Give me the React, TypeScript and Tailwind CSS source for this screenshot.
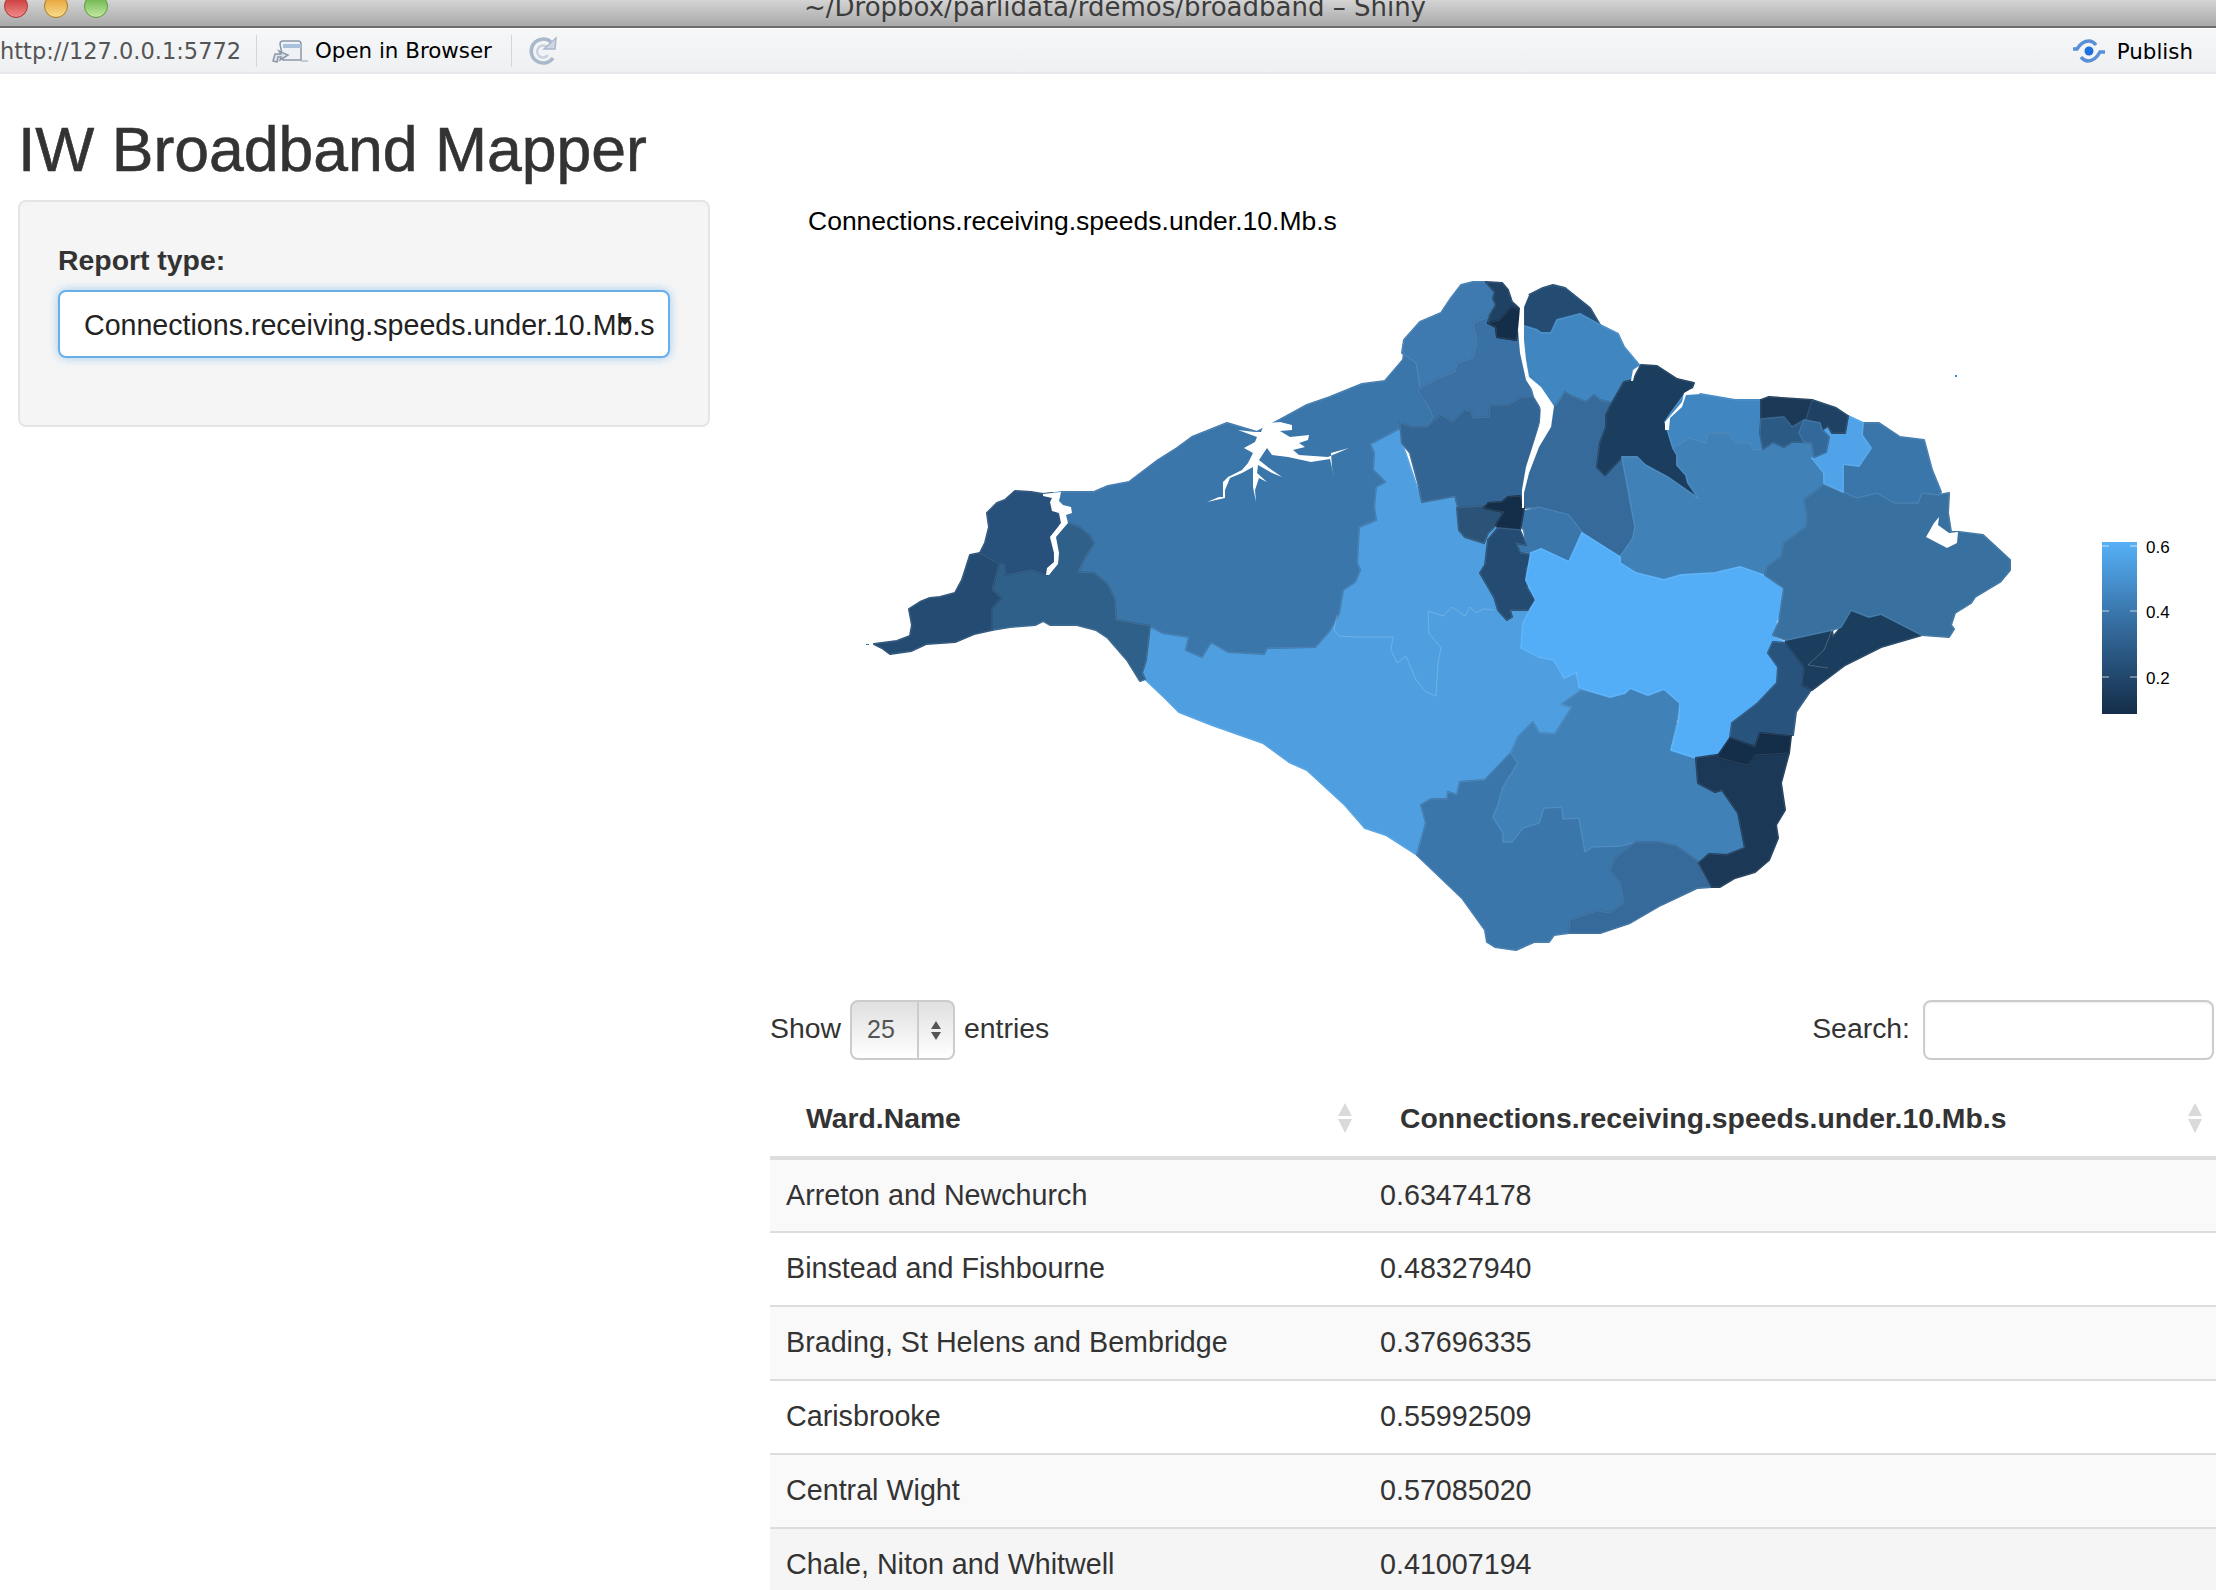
import React from 'react';

const SANS = "font-['Liberation_Sans',Arial,sans-serif]";
const UI = "font-['DejaVu_Sans',sans-serif]";

// ward shapes, painted in order so later ones define the shared edges
const wards: { fill: string; pts: string }[] = [
  { fill: '#4f9fe0', pts: '1400,428 1370,444 1374,453 1373,470 1385,482 1376,487 1374,507 1376,520 1359,527 1357,563 1360,570 1355,582 1343,590 1339,613 1330,630 1315,647 1267,648 1264,654 1228,652 1211,642 1202,657 1186,650 1189,637 1163,633 1150,626 1146,660 1142,673 1145,679 1164,697 1179,712 1212,725 1263,743 1289,762 1307,770 1345,805 1365,828 1386,835 1417,855 1426,823 1421,805 1431,799 1447,799 1448,792 1457,795 1460,782 1485,780 1511,753 1518,737 1533,722 1539,733 1555,734 1572,707 1562,704 1582,690 1560,640 1530,560 1500,530 1459,512 1455,496 1422,502 1402,443' },
  { fill: '#3b76ab', pts: '1062,492 1094,492 1108,486 1129,482 1158,460 1177,448 1192,437 1227,423 1257,432 1274,423 1307,405 1330,397 1362,384 1385,381 1403,360 1406,340 1416,363 1420,380 1420,393 1426,403 1433,417 1426,427 1410,427 1400,423 1400,428 1370,444 1374,453 1373,470 1385,482 1376,487 1374,507 1376,520 1359,527 1357,563 1360,570 1355,582 1343,590 1339,613 1330,630 1315,647 1267,648 1264,654 1228,652 1211,642 1202,657 1186,650 1189,637 1163,633 1150,626 1116,620 1115,600 1108,585 1094,573 1078,572 1085,557 1094,543 1089,535 1079,527 1060,525 1050,505 1050,494' },
  { fill: '#2f6089', pts: '999,564 1004,564 1006,575 1031,570 1047,575 1050,550 1050,530 1068,523 1079,527 1089,535 1094,543 1085,557 1078,572 1094,573 1108,585 1115,600 1116,620 1150,626 1146,660 1142,673 1145,679 1140,681 1127,660 1108,638 1096,630 1077,625 1050,625 1043,621 1035,625 1010,627 992,630 992,608 1001,598 992,590' },
  { fill: '#27507a', pts: '980,553 985,543 989,527 987,513 997,503 1005,500 1015,491 1031,492 1043,494 1052,493 1052,507 1060,517 1060,527 1050,537 1054,553 1054,565 1047,575 1031,570 1006,575 1004,564 999,564' },
  { fill: '#244c73', pts: '874,644 897,641 910,636 912,625 909,609 920,602 930,598 940,597 955,593 962,580 970,555 980,553 999,564 992,590 1001,598 992,608 992,630 974,634 955,642 926,644 911,651 890,654 882,648' },
  { fill: '#3e7ab0', pts: '1404,340 1420,322 1441,313 1451,298 1461,285 1473,282 1486,282 1496,293 1494,302 1496,305 1489,317 1473,323 1477,343 1473,358 1457,363 1455,372 1439,378 1420,388 1418,373 1416,363 1402,353' },
  { fill: '#3a71a4', pts: '1473,323 1489,317 1489,325 1496,327 1497,337 1516,340 1520,327 1522,353 1533,397 1522,397 1508,405 1490,405 1489,417 1471,418 1470,410 1453,422 1441,415 1427,427 1433,417 1427,403 1418,392 1420,388 1439,378 1455,372 1457,363 1473,358 1477,343' },
  { fill: '#336594', pts: '1400,423 1412,427 1427,427 1441,415 1453,422 1465,410 1471,411 1473,418 1489,417 1490,405 1508,405 1522,397 1533,397 1539,407 1541,413 1535,440 1526,467 1522,490 1522,497 1516,496 1506,500 1498,503 1486,503 1484,510 1459,511 1455,496 1422,502 1418,483 1410,453 1402,443' },
  { fill: '#1f4264', pts: '1486,282 1502,283 1508,290 1512,302 1520,308 1520,320 1516,340 1497,337 1496,327 1488,323 1490,315 1496,305 1493,298 1495,292' },
  { fill: '#142d48', pts: '1500,320 1512,307 1520,310 1520,320 1516,340 1497,337 1496,327 1488,323' },
  { fill: '#244c73', pts: '1529,295 1543,288 1553,285 1565,288 1580,300 1590,308 1600,325 1580,314 1557,320 1551,333 1541,333 1537,330 1524,326 1524,307' },
  { fill: '#4087c2', pts: '1524,326 1537,330 1541,333 1551,333 1557,320 1580,314 1600,325 1618,334 1624,347 1639,365 1633,370 1631,381 1624,382 1612,403 1600,400 1594,395 1586,402 1571,396 1565,392 1557,405 1553,406 1541,387 1529,377 1526,360 1520,337' },
  { fill: '#356a9a', pts: '1557,405 1565,392 1571,396 1586,402 1594,395 1600,400 1612,403 1606,415 1606,427 1600,443 1597,467 1605,475 1622,457 1635,527 1633,538 1620,557 1582,532 1569,515 1539,507 1524,508 1522,493 1529,473 1539,447 1551,427 1554,406' },
  { fill: '#1b3d5e', pts: '1641,365 1657,366 1677,379 1694,383 1692,388 1684,395 1671,413 1665,422 1669,435 1677,455 1677,465 1686,475 1688,483 1699,499 1682,487 1669,478 1645,465 1637,457 1622,457 1605,475 1597,467 1600,443 1606,427 1606,415 1612,403 1624,382 1633,380' },
  { fill: '#4087c2', pts: '1700,394 1735,400 1761,400 1760,433 1763,449 1753,450 1751,443 1735,443 1728,433 1708,433 1706,443 1690,438 1673,448 1669,435 1665,422 1671,413 1684,395' },
  { fill: '#4081b8', pts: '1622,457 1637,457 1645,465 1669,478 1682,487 1699,499 1688,483 1686,475 1677,465 1677,455 1673,448 1690,438 1706,443 1708,433 1728,433 1735,443 1751,443 1753,450 1763,449 1773,442 1784,447 1792,442 1804,442 1812,443 1814,457 1812,458 1824,473 1824,485 1804,500 1807,515 1806,527 1784,543 1781,557 1767,567 1765,575 1743,571 1722,570 1714,574 1681,575 1665,580 1641,575 1620,563 1620,557 1633,538 1635,527' },
  { fill: '#3b76ab', pts: '1529,510 1539,507 1569,515 1582,532 1575,550 1569,562 1553,555 1541,549 1531,553 1520,553 1516,543 1526,545 1524,530 1518,523 1520,512' },
  { fill: '#2b5377', pts: '1457,508 1484,506 1504,506 1504,512 1496,525 1488,533 1484,543 1465,537 1459,530' },
  { fill: '#142d48', pts: '1484,508 1488,503 1502,502 1508,497 1520,496 1524,508 1520,530 1498,528 1496,525 1504,512' },
  { fill: '#244c73', pts: '1498,528 1520,530 1526,545 1516,543 1520,553 1531,555 1531,567 1526,568 1527,588 1536,602 1531,610 1510,610 1512,617 1507,620 1498,610 1494,597 1480,573 1485,565 1488,540' },
  { fill: '#3b76ab', pts: '1511,753 1485,780 1460,782 1457,795 1448,792 1447,799 1431,799 1421,805 1426,823 1417,855 1462,898 1485,930 1487,942 1495,947 1516,950 1534,942 1549,942 1554,935 1569,933 1570,920 1597,911 1610,913 1624,903 1620,882 1610,870 1615,858 1636,842 1590,800 1540,740' },
  { fill: '#4081b8', pts: '1562,704 1582,690 1610,697 1630,688 1648,695 1664,689 1680,703 1671,750 1696,758 1698,783 1715,792 1722,790 1738,813 1745,848 1727,855 1709,854 1699,863 1676,847 1658,843 1636,842 1620,846 1592,847 1585,852 1579,818 1563,819 1562,807 1544,808 1539,823 1523,828 1512,842 1503,842 1503,833 1493,817 1498,805 1503,787 1518,763 1511,753 1518,737 1533,722 1539,733 1555,734 1572,707' },
  { fill: '#356a9a', pts: '1570,920 1597,911 1610,913 1624,903 1620,882 1610,870 1615,858 1636,842 1658,842 1676,846 1699,862 1704,875 1712,887 1697,888 1661,905 1630,923 1600,933 1569,933' },
  { fill: '#54aef7', pts: '1582,533 1620,557 1620,563 1636,573 1664,580 1681,575 1715,573 1740,567 1766,576 1783,588 1781,607 1784,607 1776,622 1779,630 1774,637 1784,642 1771,652 1778,667 1777,683 1758,703 1732,723 1730,752 1696,758 1671,750 1679,720 1680,703 1664,689 1648,695 1630,688 1625,693 1610,697 1587,690 1579,687 1577,672 1564,678 1554,660 1539,657 1521,648 1523,623 1531,608 1536,600 1526,580 1531,553 1541,549 1569,562' },
  { fill: '#1b3857', pts: '1696,758 1730,753 1755,755 1789,753 1781,783 1785,810 1776,825 1778,838 1769,860 1755,872 1735,878 1720,887 1712,887 1699,863 1709,854 1727,855 1745,848 1738,813 1722,790 1715,792 1698,783' },
  { fill: '#28537d', pts: '1773,642 1786,643 1804,667 1801,683 1811,690 1796,712 1793,735 1760,733 1755,747 1730,738 1732,723 1758,703 1777,683 1778,667 1768,653' },
  { fill: '#142d48', pts: '1717,757 1730,738 1755,747 1760,733 1791,736 1789,753 1755,755 1748,765 1738,763 1720,758' },
  { fill: '#1b3d5e', pts: '1786,640 1832,630 1833,637 1841,627 1851,610 1869,617 1881,614 1922,635 1881,647 1845,665 1812,690 1802,685 1804,667 1786,643' },
  { fill: '#38709f', pts: '1824,485 1843,492 1857,498 1877,493 1894,503 1918,503 1922,493 1939,495 1949,493 1948,513 1951,532 1959,532 1983,535 2010,560 2010,570 2000,582 1975,597 1971,603 1955,613 1951,625 1954,629 1949,637 1922,635 1881,614 1869,617 1851,610 1841,627 1832,630 1786,640 1773,635 1779,622 1784,588 1765,575 1767,567 1781,557 1784,543 1806,527 1807,515 1804,500' },
  { fill: '#3b76ab', pts: '1863,423 1879,423 1900,437 1924,440 1932,470 1941,492 1939,495 1922,493 1918,503 1894,503 1877,493 1857,498 1843,492 1843,464 1859,466 1863,452 1871,448 1862,435' },
  { fill: '#50a3e8', pts: '1848,416 1863,423 1862,435 1871,448 1859,466 1843,464 1843,492 1824,483 1824,473 1812,458 1826,452 1829,437 1822,430 1828,426 1832,433 1845,433' },
  { fill: '#1b3857', pts: '1761,400 1769,397 1812,400 1810,415 1804,420 1792,427 1786,425 1781,417 1761,419' },
  { fill: '#1f4264', pts: '1812,400 1836,408 1848,416 1845,433 1832,433 1828,426 1822,430 1820,423 1806,420' },
  { fill: '#2b5a85', pts: '1761,419 1784,417 1792,427 1804,420 1799,433 1804,442 1792,442 1784,447 1773,442 1763,449 1760,433' },
  { fill: '#33689a', pts: '1804,420 1820,423 1822,430 1829,437 1826,452 1814,457 1812,443 1804,442 1799,433' },
];

// estuaries and harbours cut out of the land
const water = [
  '1238,430 1255,432 1261,432 1263,427 1269,423 1280,422 1292,425 1292,430 1280,431 1290,437 1309,435 1308,440 1299,443 1305,447 1293,450 1299,455 1328,457 1349,448 1331,453 1332,467 1334,477 1330,459 1311,462 1288,457 1272,455 1267,448 1259,460 1269,468 1282,477 1272,473 1258,465 1257,473 1267,482 1259,478 1255,490 1256,502 1253,487 1253,467 1242,473 1230,478 1225,490 1225,498 1207,502 1219,497 1223,497 1223,482 1228,477 1242,470 1248,463 1253,453 1244,448 1255,442 1257,437',
  '1043,494 1061,492 1060,497 1059,501 1063,505 1071,507 1072,513 1066,515 1068,523 1056,537 1059,553 1058,564 1049,575 1046,575 1047,568 1054,562 1054,553 1050,537 1061,523 1059,513 1052,511 1050,502 1052,498 1043,496',
  '1510,288 1514,302 1520,308 1518,330 1520,353 1526,380 1541,403 1540,423 1526,467 1522,490 1522,508 1524,508 1524,493 1529,473 1539,447 1551,427 1554,406 1541,387 1529,377 1526,360 1524,340 1524,307 1529,295 1522,288',
  '1694,388 1700,394 1686,395 1682,407 1670,418 1669,430 1665,430 1665,422 1682,402 1684,393 1691,389',
  '1633,370 1639,366 1635,372 1633,381 1631,381',
  '1939,517 1938,525 1949,533 1958,532 1957,543 1947,548 1926,537 1934,523',
];

const rows = [
  ['Arreton and Newchurch', '0.63474178', 'bg-[#f9f9f9]'],
  ['Binstead and Fishbourne', '0.48327940', 'bg-white'],
  ['Brading, St Helens and Bembridge', '0.37696335', 'bg-[#f9f9f9]'],
  ['Carisbrooke', '0.55992509', 'bg-white'],
  ['Central Wight', '0.57085020', 'bg-[#f9f9f9]'],
  ['Chale, Niton and Whitwell', '0.41007194', 'bg-[#f5f5f5]'],
];

const SortIcon = ({ className }: { className: string }) => (
  <svg className={className} width="18" height="32" viewBox="0 0 18 32">
    <path d="M9 1 L16 14 H2 Z M9 31 L16 17 H2 Z" fill="#dadada" />
  </svg>
);

const Chart = () => (
  <svg className="block" width="1446" height="810" viewBox="770 190 1446 810">
    <text x="808" y="230" fontSize="26.5" fill="#000" fontFamily="Liberation Sans, Arial, sans-serif">
      Connections.receiving.speeds.under.10.Mb.s
    </text>
    {wards.map((w, i) => (
      <g key={i}>
        <polygon points={w.pts} fill={w.fill} stroke={w.fill} strokeWidth="2" strokeLinejoin="round" />
        <polygon points={w.pts} fill="none" stroke="#ffffff" strokeOpacity="0.1" strokeWidth="1" strokeLinejoin="round" />
      </g>
    ))}
    {water.map((p, i) => (
      <polygon key={i} points={p} fill="#fff" />
    ))}
    <polyline points="1337,615 1334,630 1339,636 1358,637 1393,637 1391,650 1397,663 1406,656 1416,680 1426,692 1436,696 1438,663 1441,648 1429,633 1428,611 1443,616 1452,607 1465,616 1470,607 1476,613 1483,609 1495,610" fill="none" stroke="#fff" strokeOpacity="0.18" strokeWidth="1" />
    <polyline points="1832,630 1824,650 1808,665 1828,668" fill="none" stroke="#fff" strokeOpacity="0.2" strokeWidth="1" />
    <rect x="866" y="644" width="3" height="1" fill="#3b76ab" />
    <rect x="1955" y="375" width="2" height="2" fill="#4087c2" />
    <defs>
      <linearGradient id="legend" x1="0" y1="0" x2="0" y2="1">
        <stop offset="0" stopColor="#55b0f7" />
        <stop offset="0.5" stopColor="#346a9c" />
        <stop offset="1" stopColor="#142d48" />
      </linearGradient>
    </defs>
    <rect x="2102" y="542" width="35" height="172" fill="url(#legend)" />
    {[546, 611, 677].map((y) => (
      <g key={y} stroke="#fff" strokeOpacity="0.7" strokeWidth="1">
        <line x1="2102" x2="2109" y1={y} y2={y} />
        <line x1="2130" x2="2137" y1={y} y2={y} />
      </g>
    ))}
    {[['0.6', 553], ['0.4', 618], ['0.2', 684]].map(([t, y]) => (
      <text key={t} x="2146" y={y} fontSize="17" fill="#000" fontFamily="Liberation Sans, Arial, sans-serif">{t}</text>
    ))}
  </svg>
);

export default function App() {
  return (
    <div className={`w-[2216px] h-[1590px] overflow-hidden bg-white text-[#333] ${SANS}`}>
      {/* window title bar */}
      <div className="relative h-[26px] overflow-hidden bg-gradient-to-b from-[#d4d4d4] to-[#a9a9a9]">
        <div className="flex gap-[16px] pl-[4px] -mt-[6px]">
          <span className="w-[24px] h-[24px] rounded-full border border-[#a33] bg-gradient-to-b from-[#c0272d] to-[#f08a8a]" />
          <span className="w-[24px] h-[24px] rounded-full border border-[#a87a20] bg-gradient-to-b from-[#e39a1c] to-[#f7dc8c]" />
          <span className="w-[24px] h-[24px] rounded-full border border-[#5b9a3a] bg-gradient-to-b from-[#5fae3c] to-[#c2e8a0]" />
        </div>
        <div className={`absolute left-0 right-0 top-[-9px] pl-[14px] text-center text-[#3c3c3c] text-[26px] leading-[32px] ${UI}`}>
          ~/Dropbox/parlidata/rdemos/broadband – Shiny
        </div>
      </div>
      <div className="h-[3px] border-t-2 border-[#6d6d6d] bg-white" />
      {/* viewer toolbar */}
      <div className={`flex items-center h-[45px] border-b-2 border-[#e8e8ec] bg-gradient-to-b from-[#f5f7f8] to-[#eef0f2] text-[21.4px] ${UI}`}>
        <span className="w-[257px] text-[22.5px] text-[#555] border-r border-[#d4d6d8] leading-[32px] whitespace-nowrap">http://127.0.0.1:5772</span>
        <svg className="ml-[14px]" width="38" height="28" viewBox="0 0 38 28">
          <path d="M9 7 Q9 4 12 4 H27 Q30 4 30 7 V23 H12 Z" fill="#eef1f5" stroke="#8c98a8" strokeWidth="1.5" />
          <path d="M12 9 H30" stroke="#a9c0dc" strokeWidth="4" />
          <path d="M2 24 L4 17 H10 L8 14 L17 18 L9 23 L10 20 H7 L6 25 Z" fill="#dfe4ea" stroke="#8c98a8" strokeWidth="1.5" />
          <path d="M30 24 H37" stroke="#b5bcc5" strokeWidth="1.5" />
        </svg>
        <span className="ml-[6px] w-[197px] text-black border-r border-[#d4d6d8] leading-[32px] whitespace-nowrap">Open in Browser</span>
        <svg className="ml-[15px]" width="32" height="30" viewBox="0 0 32 30">
          <path d="M24 6 A12 12 0 1 0 26 22" fill="none" stroke="#aab8cc" strokeWidth="3.5" />
          <path d="M21 12 A6 6 0 1 0 21 19" fill="none" stroke="#c8d2e0" strokeWidth="2.5" />
          <path d="M17 13 L28 13 L29 2 Z" fill="#cfd7e3" stroke="#aab8cc" strokeWidth="1.5" />
        </svg>
        <div className="flex-1" />
        <svg width="34" height="24" viewBox="0 0 34 24">
          <path d="M1 10 H5 Q10 2 17 2 Q21 2 24 6" fill="none" stroke="#5b8fd6" strokeWidth="3.5" />
          <path d="M33 13 H28 Q23 22 16 22 Q12 22 9 18" fill="none" stroke="#5b8fd6" strokeWidth="3.5" />
          <circle cx="17" cy="12" r="4.5" fill="#1e6fe0" />
        </svg>
        <span className="ml-[11px] mr-[23px] mt-[2px] text-black leading-[32px]">Publish</span>
      </div>

      <div className="flex">
        {/* sidebar */}
        <div className="w-[770px] shrink-0 pl-[18px] pr-[60px]">
          <h1 className="mt-[42px] text-[62.5px] leading-[66px] font-normal [-webkit-text-stroke:0.6px_#333]">IW Broadband Mapper</h1>
          <div className="mt-[18px] h-[227px] rounded-lg border-2 border-[#e5e5e5] bg-[#f5f5f5] pt-[38px] px-[38px]">
            <label className="block text-[28.4px] leading-[40px] font-bold">Report type:</label>
            <div className="relative mt-[10px] h-[68px] w-[612px] rounded-lg border-2 border-[#66afe9] bg-white pl-[24px] text-[28.6px] leading-[66px] text-[#222] whitespace-nowrap shadow-[0_0_10px_rgba(102,175,233,0.6)]">
              Connections.receiving.speeds.under.10.Mb.s
              <span className="absolute left-[558px] top-[25px] w-0 h-0 border-x-[7px] border-t-[8px] border-x-transparent border-t-[#222]" />
            </div>
          </div>
        </div>

        {/* chart and table */}
        <div className="flex-1 min-w-0 pt-[116px]">
          <Chart />
          <div className="flex items-center justify-between h-[60px] text-[28.4px]">
            <div className="flex items-center">
              <span className="mb-[4px]">Show</span>
              <div className="ml-[9px] flex h-[60px] w-[105px] rounded-lg border-2 border-[#ccc] bg-gradient-to-b from-[#e0e0e0] to-white text-[25px] text-[#555]">
                <span className="w-[67px] pl-[15px] leading-[54px] border-r-2 border-[#ccc]">25</span>
                <span className="flex-1 flex flex-col items-center justify-center gap-[3px]">
                  <span className="w-0 h-0 border-x-[5px] border-b-[8px] border-x-transparent border-b-[#555]" />
                  <span className="w-0 h-0 border-x-[5px] border-t-[8px] border-x-transparent border-t-[#555]" />
                </span>
              </div>
              <span className="ml-[9px] mb-[4px]">entries</span>
            </div>
            <div className="flex items-center">
              <span className="mb-[4px]">Search:</span>
              <input className="ml-[13px] mr-[2px] h-[60px] w-[291px] rounded-lg border-2 border-[#ccc] bg-white shadow-[inset_0_1px_2px_rgba(0,0,0,0.08)]" />
            </div>
          </div>
          <table className="mt-[20px] w-full table-fixed border-collapse text-[28.7px]">
            <thead>
              <tr className="h-[78px] border-b-4 border-[#ddd] text-[28.35px]">
                <th className="relative w-[594px] pl-[36px] text-left font-bold">
                  Ward.Name
                  <SortIcon className="absolute right-[10px] top-[22px]" />
                </th>
                <th className="relative pl-[36px] text-left font-bold">
                  Connections.receiving.speeds.under.10.Mb.s
                  <SortIcon className="absolute right-[12px] top-[22px]" />
                </th>
              </tr>
            </thead>
            <tbody>
              {rows.map(([name, value, bg]) => (
                <tr key={name} className={`h-[74px] border-b-2 border-[#ddd] ${bg}`}>
                  <td className="pl-[16px]">{name}</td>
                  <td className="pl-[16px]">{value}</td>
                </tr>
              ))}
            </tbody>
          </table>
        </div>
      </div>
    </div>
  );
}
